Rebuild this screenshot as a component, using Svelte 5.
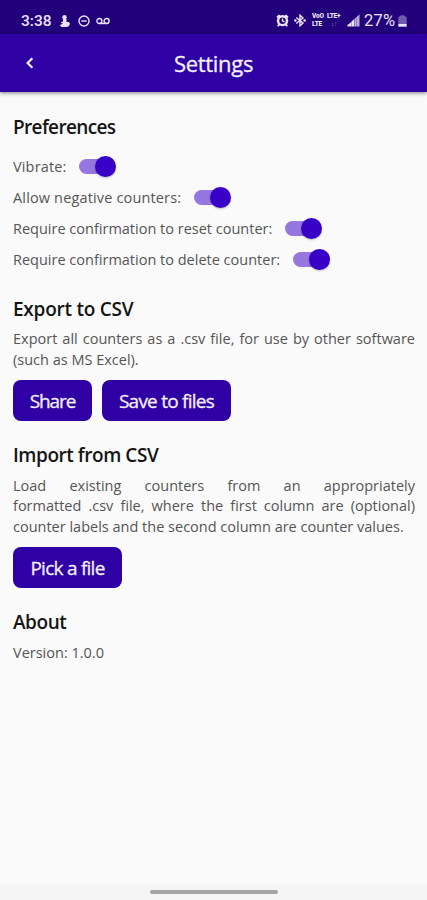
<script>
	let preferences = $state([
		{label: "Vibrate:", on: true},
		{label: "Allow negative counters:", on: true},
		{label: "Require confirmation to reset counter:", on: true},
		{label: "Require confirmation to delete counter:", on: true},
	]);
</script>

<div class="screen">
	<div class="status">
		<span class="time">3:38</span>
		<svg class="person" width="12" height="14" viewBox="0 0 12 14">
			<circle cx="5.500" cy="3.200" r="2.200" />
			<path d="M4 5h3.500v3H10l1 2-1.500 2.500L7 13H2.500L.8 11 4 9.700 1.500 8.500 4 7.500z" />
		</svg>
		<svg class="dnd" width="12" height="12" viewBox="0 0 12 12">
			<circle cx="6" cy="6" r="5" class="line" />
			<path d="M3.300 6h5.400" class="line" />
		</svg>
		<svg class="voicemail" width="14" height="8" viewBox="0 0 14 8">
			<circle cx="3.400" cy="4" r="2.500" class="line" />
			<circle cx="10.600" cy="4" r="2.500" class="line" />
			<path d="M3.400 6.500h7.200" class="line" />
		</svg>
		<div class="right">
			<svg width="13" height="13" viewBox="0 0 13 13">
				<path d="M.5 2.500 3 .5l1.200 1A6 6 0 0 1 8.800 1.500l1.200-1 2.500 2-1 1.700a5.500 5.500 0 0 1-.5 6l.9 1.600-1.200.9-1.500-1.200a5.500 5.500 0 0 1-5.400 0l-1.500 1.200-1.200-.9 1-1.600a5.500 5.500 0 0 1-.6-6z" />
				<circle cx="6.500" cy="6.800" r="3.200" fill="#22007c" />
				<path d="M6.500 4.500v2.500l2 .8" class="line" />
			</svg>
			<svg class="bluetooth" width="12" height="13" viewBox="0 0 12 13">
				<path d="m2.300 3.500 6.700 5.600-3 2.800V1.200l3 2.800-6.700 5.500" class="line" />
				<circle cx="1.400" cy="6.500" r="1.300" />
				<circle cx="10.600" cy="6.500" r="1.300" />
			</svg>
			<div class="net volte"><span>VoO</span><span>LTE</span></div>
			<div class="net lte"><span>LTE+</span><span class="dim">↓↑</span></div>
			<svg class="signal" width="13" height="13" viewBox="0 0 13 13">
				<path d="M.5 12.500V11L4 8.200v4.300zM4.300 12.500V7.700L7 5.300v7.200z" />
				<path d="M7.300 12.500V5l2.500-2.200v9.700zM10 12.500V2.600L12.500.3v12.200z" opacity=".75" />
			</svg>
			<span class="percent">27%</span>
			<svg class="battery" width="9" height="12" viewBox="0 0 9 12">
				<path d="M.3 9V2.500Q.3 1.500 2 1.200L3 .2h3l1 1q1.700.3 1.700 1.300V9z" opacity=".4" />
				<path d="M.3 9h8.400v2.700H.3z" />
			</svg>
		</div>
	</div>

	<header>
		<button class="back" aria-label="Back">
			<svg width="10" height="14" viewBox="0 0 10 14"><path d="M7.300 2.200 2.600 7l4.700 4.800" /></svg>
		</button>
		<h1>Settings</h1>
	</header>

	<main>
		<section>
			<h2 class="h-pref">Preferences</h2>
			{#each preferences as pref, i}
				<div class="row">
					<span class="label{i}">{pref.label}</span>
					<button class="switch" class:on={pref.on} aria-label={pref.label} onclick={() => pref.on = !pref.on}>
						<span class="thumb"></span>
					</button>
				</div>
			{/each}
		</section>

		<section>
			<h2 class="h-export">Export to CSV</h2>
			<p>Export all counters as a .csv file, for use by other software (such as MS Excel).</p>
			<div class="buttons">
				<button class="btn share">Share</button>
				<button class="btn save">Save to files</button>
			</div>
		</section>

		<section>
			<h2>Import from CSV</h2>
			<p>Load existing counters from an appropriately formatted&nbsp;.csv file, where the first column are (optional) counter labels and the second column are counter values.</p>
			<div class="buttons">
				<button class="btn pick">Pick a file</button>
			</div>
		</section>

		<section>
			<h2>About</h2>
			<p>Version: 1.0.0</p>
		</section>
	</main>

	<div class="nav"><div class="handle"></div></div>
</div>

<style>
	:global(body) {
		margin: 0;
	}
	.screen {
		display: flex;
		flex-direction: column;
		width: 427px;
		height: 900px;
		overflow: hidden;
		background: #fafafa;
		font-family: "Open Sans", "Noto Sans", sans-serif;
		font-stretch: 88%;
		color: #555;
	}
	button {
		border: 0;
		padding: 0;
		font: inherit;
	}
	h1, h2, p {
		margin: 0;
	}

	.status {
		display: flex;
		align-items: center;
		box-sizing: border-box;
		height: 34px;
		padding: 7px 20px 0 21px;
		background: #22007c;
		color: #e9e3f8;
		font-family: Roboto, sans-serif;
		font-stretch: normal;
	}
	.status svg {
		fill: #e9e3f8;
		flex: none;
	}
	.status .line {
		fill: none;
		stroke: #e9e3f8;
		stroke-width: 1.400;
	}
	.time {
		width: 38px;
		font-size: 15.500px;
		font-weight: 500;
	}
	.dnd {
		margin-left: 7px;
	}
	.voicemail {
		margin-left: 6px;
	}
	.right {
		display: flex;
		align-items: center;
		margin-left: auto;
	}
	.bluetooth {
		margin-left: 5px;
	}
	.net {
		display: flex;
		flex-direction: column;
		gap: 1px;
		font-size: 6.500px;
		line-height: 7px;
		font-weight: 900;
		letter-spacing: -0.200px;
	}
	.volte {
		width: 15px;
		margin-left: 6px;
	}
	.lte {
		width: 16px;
	}
	.dim {
		padding-left: 4px;
		opacity: .5;
	}
	.signal {
		margin-left: 4px;
	}
	.percent {
		width: 33px;
		margin-left: 4px;
		font-size: 16.500px;
		letter-spacing: .200px;
	}
	.battery {
		margin-left: 1px;
	}

	header {
		display: grid;
		grid-template-columns: 60px 1fr 60px;
		align-items: center;
		height: 58px;
		background: #2f00a3;
		color: #f4f0ff;
		box-shadow: 0 1px 4px rgba(0, 0, 0, .5);
	}
	.back {
		display: flex;
		width: 40px;
		padding-left: 25px;
		background: none;
	}
	.back path {
		fill: none;
		stroke: #f4f0ff;
		stroke-width: 2.200;
	}
	h1 {
		padding-bottom: 1px;
		font-size: 22px;
		font-weight: 400;
		letter-spacing: -0.300px;
		text-align: center;
		-webkit-text-stroke: .3px #f4f0ff;
	}

	main {
		display: flex;
		flex: 1;
		flex-direction: column;
		gap: 22px;
		padding: 22.500px 12px 0 13px;
	}
	h2 {
		margin-bottom: 8.500px;
		font-size: 19px;
		line-height: 24px;
		font-weight: 600;
		letter-spacing: -0.450px;
		color: #151515;
	}
	.h-pref {
		margin-bottom: 12px;
		letter-spacing: -0.650px;
	}
	.h-export {
		letter-spacing: -0.250px;
	}
	p {
		font-size: 14.500px;
		line-height: 20.500px;
		text-align: justify;
	}
	.row {
		display: flex;
		align-items: center;
		gap: 13px;
		height: 31px;
		font-size: 14.500px;
	}
	.label0 {
		letter-spacing: .150px;
	}
	.label1 {
		letter-spacing: .150px;
	}
	.switch {
		display: flex;
		align-items: center;
		width: 32px;
		height: 15px;
		border-radius: 8px;
		background: #bbb;
	}
	.switch.on {
		justify-content: flex-end;
		background: #9677e0;
	}
	.thumb {
		flex: none;
		width: 21px;
		height: 21px;
		margin-right: -5px;
		border-radius: 50%;
		background: #3900c8;
		box-shadow: 0 1px 2px rgba(0, 0, 0, .25);
	}
	.buttons {
		display: flex;
		gap: 10px;
		margin-top: 10px;
	}
	.btn {
		height: 41px;
		border-radius: 8px;
		background: #2f00a3;
		color: #f4f0ff;
		font-size: 19px;
		letter-spacing: -0.750px;
		-webkit-text-stroke: .3px #f4f0ff;
	}
	.share {
		width: 79px;
		letter-spacing: -1.100px;
	}
	.save {
		width: 129px;
	}
	.pick {
		width: 109px;
	}

	.nav {
		display: flex;
		justify-content: center;
		align-items: center;
		height: 16px;
		background: #f5f5f5;
	}
	.handle {
		width: 128px;
		height: 4px;
		border-radius: 2px;
		background: #a3a3a3;
	}
</style>
